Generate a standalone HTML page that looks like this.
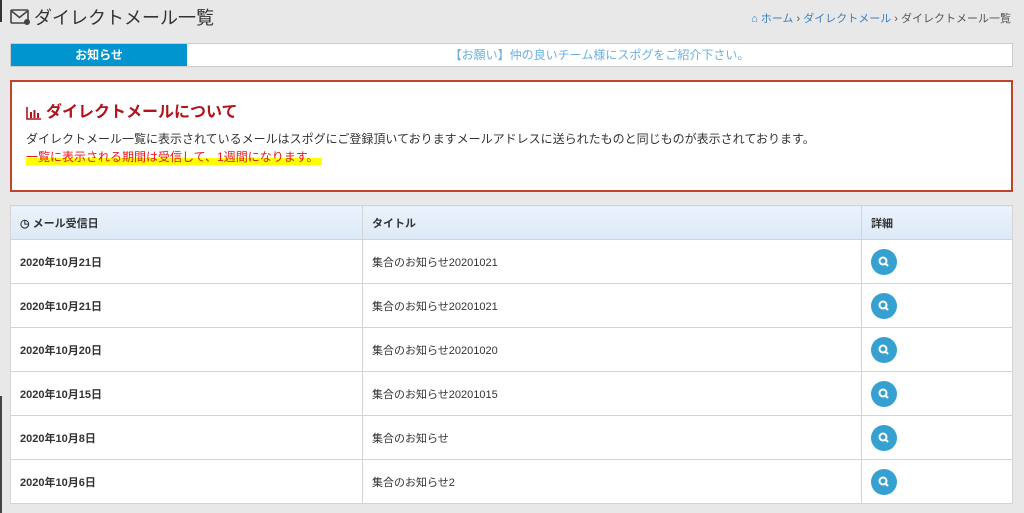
<!DOCTYPE html>
<html><head><meta charset="utf-8"><style>
*{margin:0;padding:0;box-sizing:border-box}
body{width:1024px;height:513px;background:#e8e8e8;font-family:"Liberation Sans","Noto Sans CJK JP",sans-serif;color:#333;position:relative;overflow:hidden}
.abs{position:absolute}
h1{position:absolute;left:34px;top:6px;font-size:18px;font-weight:normal;color:#333;line-height:24px}
.bc{position:absolute;right:13px;top:12px;font-size:11px;color:#555;line-height:14px}
.bc a{color:#3a7fc1}
.notice{position:absolute;left:10px;top:43px;width:1003px;height:24px;background:#fff;border:1px solid #ccc}
.notice .lab{position:absolute;left:0;top:0;width:176px;height:22px;background:#0095cf;color:#fff;font-size:12px;font-weight:bold;text-align:center;line-height:22px}
.notice .msg{position:absolute;left:176px;right:0;top:0;text-align:center;color:#6ab0df;font-size:12px;line-height:22px}
.alert{position:absolute;left:10px;top:80px;width:1003px;height:112px;background:#fff;border:2px solid #c1432a}
.alert h2{position:absolute;left:14px;top:21px;font-size:16px;color:#b0141c;line-height:20px}
.alert p{position:absolute;left:14px;font-size:12px;line-height:16px}
table{position:absolute;left:10px;top:205px;width:1003px;border-collapse:collapse;background:#fff;font-size:11px}
td,th{border:1px solid #d4d4d4;padding:0 0 0 9px;text-align:left;height:44px}
th{height:34px;background:linear-gradient(#ebf3fc,#dce9f7);font-weight:bold}
td.d{font-weight:bold}
.ic{display:inline-block;width:26px;height:26px;border-radius:50%;background:#36a1d1;vertical-align:middle;position:relative}
</style></head><body>
<div class="abs" style="left:0;top:0;width:2px;height:22px;background:#333"></div>
<div class="abs" style="left:0;top:396px;width:2px;height:117px;background:#444"></div>
<svg class="abs" style="left:10px;top:9px" width="21" height="17" viewBox="0 0 21 17"><rect x="1" y="1" width="17" height="13" rx="1" fill="none" stroke="#444" stroke-width="1.6"/><path d="M1.5 2 L9.5 8.5 L17.5 2" fill="none" stroke="#444" stroke-width="1.6"/><circle cx="17" cy="13" r="3" fill="#444"/></svg>
<h1>ダイレクトメール一覧</h1>
<div class="bc"><a>&#8962; ホーム</a> › <a>ダイレクトメール</a> › ダイレクトメール一覧</div>
<div class="notice"><div class="lab">お知らせ</div><div class="msg">【お願い】仲の良いチーム様にスポグをご紹介下さい。</div></div>
<div class="alert">
<svg class="abs" style="left:14px;top:25px" width="15" height="13" viewBox="0 0 15 13"><path d="M1 0V12H15" fill="none" stroke="#b0141c" stroke-width="1.6"/><rect x="4" y="5" width="2" height="6" fill="#b0141c"/><rect x="7.5" y="3" width="2" height="8" fill="#b0141c"/><rect x="11" y="6" width="2" height="5" fill="#b0141c"/></svg>
<h2 style="left:34px">ダイレクトメールについて</h2>
<p style="top:49px">ダイレクトメール一覧に表示されているメールはスポグにご登録頂いておりますメールアドレスに送られたものと同じものが表示されております。</p>
<p style="top:67px;color:#e8141c;background:linear-gradient(transparent 55%,#ffff00 55%);width:296px">一覧に表示される期間は受信して、1週間になります。</p>
</div>
<table>
<tr><th style="width:352px">&#9719; メール受信日</th><th style="width:499px">タイトル</th><th>詳細</th></tr>
<tr><td class="d">2020年10月21日</td><td>集合のお知らせ20201021</td><td><span class="ic"><svg width="26" height="26"><circle cx="12" cy="12" r="3.5" fill="none" stroke="#fff" stroke-width="2"/><path d="M14.5 14.5 L17 17" stroke="#fff" stroke-width="2.2"/></svg></span></td></tr>
<tr><td class="d">2020年10月21日</td><td>集合のお知らせ20201021</td><td><span class="ic"><svg width="26" height="26"><circle cx="12" cy="12" r="3.5" fill="none" stroke="#fff" stroke-width="2"/><path d="M14.5 14.5 L17 17" stroke="#fff" stroke-width="2.2"/></svg></span></td></tr>
<tr><td class="d">2020年10月20日</td><td>集合のお知らせ20201020</td><td><span class="ic"><svg width="26" height="26"><circle cx="12" cy="12" r="3.5" fill="none" stroke="#fff" stroke-width="2"/><path d="M14.5 14.5 L17 17" stroke="#fff" stroke-width="2.2"/></svg></span></td></tr>
<tr><td class="d">2020年10月15日</td><td>集合のお知らせ20201015</td><td><span class="ic"><svg width="26" height="26"><circle cx="12" cy="12" r="3.5" fill="none" stroke="#fff" stroke-width="2"/><path d="M14.5 14.5 L17 17" stroke="#fff" stroke-width="2.2"/></svg></span></td></tr>
<tr><td class="d">2020年10月8日</td><td>集合のお知らせ</td><td><span class="ic"><svg width="26" height="26"><circle cx="12" cy="12" r="3.5" fill="none" stroke="#fff" stroke-width="2"/><path d="M14.5 14.5 L17 17" stroke="#fff" stroke-width="2.2"/></svg></span></td></tr>
<tr><td class="d" style="height:43px">2020年10月6日</td><td>集合のお知らせ2</td><td><span class="ic"><svg width="26" height="26"><circle cx="12" cy="12" r="3.5" fill="none" stroke="#fff" stroke-width="2"/><path d="M14.5 14.5 L17 17" stroke="#fff" stroke-width="2.2"/></svg></span></td></tr>
</table>
</body></html>
